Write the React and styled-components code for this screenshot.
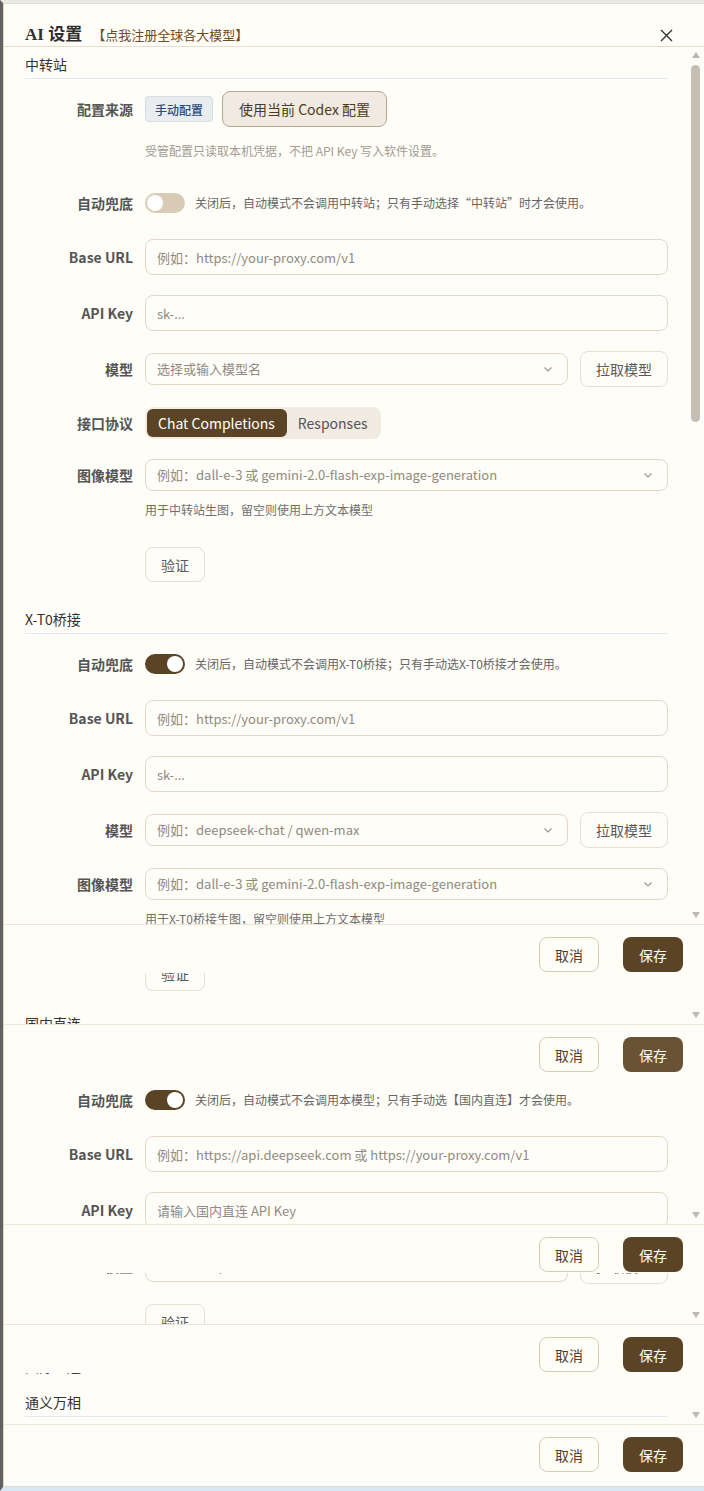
import React from "react";
import styled, { createGlobalStyle } from "styled-components";

const GlobalStyle = createGlobalStyle`
  html, body {
    margin: 0;
    padding: 0;
    background: #fffdf8;
  }
  body {
    font-family: "Noto Sans CJK SC", "Noto Sans", sans-serif;
    font-size: 14px;
    color: #333;
  }
  * { box-sizing: border-box; }
`;

const Frame = styled.div`
  width: 704px;
  border-top: 3px solid #ebe8e1;
  border-left: 3px solid #626262;
  border-bottom: 4px solid #d9e6f3;
  background: #fffdf8;
`;

const Modal = styled.div`
  border-top: 1px solid #e3dccd;
  border-left: 1px solid #ddd5c4;
  border-bottom: 1px solid #e3dccd;
  background: #fffdf8;
`;

const Header = styled.div`
  height: 43px;
  display: flex;
  align-items: center;
  padding: 20px 31px 0 21px;
  border-bottom: 1px solid #e6dece;
`;

const Title = styled.div`
  font-family: "Liberation Serif", "Noto Sans CJK SC", serif;
  font-size: 17px;
  font-weight: 700;
  line-height: 22px;
  color: #2f2f2f;
`;

const SignupLink = styled.a`
  margin-left: 10px;
  font-size: 13px;
  line-height: 22px;
  color: #6b4c25;
  text-decoration: none;
  cursor: pointer;
`;

const CloseButton = styled.button`
  margin-left: auto;
  width: 14px;
  height: 14px;
  padding: 0;
  border: none;
  background: none;
  display: flex;
  align-items: center;
  justify-content: center;
  cursor: pointer;
`;

const Port = styled.div`
  position: relative;
  height: ${(p) => p.$h}px;
  display: flex;
  overflow: hidden;
`;

const Clip = styled.div`
  flex: 1;
  min-width: 0;
  overflow: hidden;
`;

const Body = styled.div`
  margin-top: -${(p) => p.$scroll}px;
  padding: 7px 21px 40px 21px;
`;

const Track = styled.div`
  width: 15px;
  flex: none;
  display: flex;
  flex-direction: column;
  align-items: center;
  padding: 5px 4px 6px 2px;
`;

const ArrowUp = styled.div`
  width: 0;
  height: 0;
  border-left: 4px solid transparent;
  border-right: 4px solid transparent;
  border-bottom: 6px solid #bdb7ad;
`;

const ArrowDown = styled(ArrowUp)`
  border-bottom: none;
  border-top: 6px solid #bdb7ad;
`;

const Thumb = styled.div`
  width: 9px;
  height: ${(p) => p.$h}px;
  margin-top: 7px;
  border-radius: 5px;
  background: #c4beb4;
`;

const Spring = styled.div`
  flex: 1;
`;

const Footer = styled.div`
  height: ${(p) => (p.$overlay ? 49 : 62)}px;
  display: flex;
  justify-content: flex-end;
  gap: 24px;
  padding: 12px 21px 0;
  border-top: 1px solid #eee5d5;
  background: #fffdf8;
  ${(p) => p.$overlay && "position: absolute; top: 0; left: 0; right: 0; z-index: 2;"}
`;

const CancelButton = styled.button`
  width: 60px;
  height: 35px;
  border: 1px solid #d9ccb3;
  border-radius: 8px;
  background: #fffdf8;
  color: #4f3f2c;
  font-family: inherit;
  font-size: 14px;
  line-height: 20px;
  cursor: pointer;
`;

const SaveButton = styled(CancelButton)`
  border: none;
  background: ${(p) => (p.$hover ? "#6a5235" : "#5b4426")};
  color: #fff;
`;

const SectionTitle = styled.div`
  margin-top: ${(p) => p.$mt || 0}px;
  font-size: 14px;
  line-height: 20px;
  color: #333;
  padding-bottom: 4px;
  border-bottom: 1px solid ${(p) => (p.$plain ? "transparent" : "#e3e8f1")};
`;

const Row = styled.div`
  display: flex;
  align-items: center;
  margin-top: ${(p) => p.$mt}px;
  height: ${(p) => p.$h || 36}px;
`;

const Label = styled.div`
  width: 120px;
  flex: none;
  padding-right: 12px;
  text-align: right;
  font-size: 14px;
  font-weight: 700;
  line-height: 20px;
  color: #555;
`;

const Field = styled.div`
  flex: 1;
  min-width: 0;
  display: flex;
  align-items: center;
  gap: ${(p) => p.$gap || 12}px;
`;

const Badge = styled.span`
  height: 26px;
  padding: 0 9px;
  display: inline-flex;
  align-items: center;
  border: 1px solid #d5dce3;
  border-radius: 4px;
  background: #e9edf0;
  color: #2c4a7c;
  font-size: 12px;
  font-weight: 500;
`;

const SoftButton = styled.button`
  height: 36px;
  padding: 0 16px;
  border: 1px solid #b5a68c;
  border-radius: 8px;
  background: #f0eae2;
  color: #4b3a25;
  font-family: inherit;
  font-size: 14px;
`;

const Hint = styled.div`
  margin-top: ${(p) => p.$mt}px;
  margin-left: 120px;
  font-size: 12px;
  line-height: 18px;
  color: ${(p) => (p.$light ? "#a29c93" : "#6f6f6f")};
`;

const Switch = styled.span`
  width: 40px;
  height: 20px;
  flex: none;
  border-radius: 10px;
  padding: 2px;
  display: flex;
  justify-content: ${(p) => (p.$on ? "flex-end" : "flex-start")};
  background: ${(p) => (p.$on ? "#5b4426" : "#d8ccb7")};

  &::after {
    content: "";
    width: 16px;
    height: 16px;
    border-radius: 50%;
    background: #fff;
  }
`;

const SwitchText = styled.span`
  font-size: 12px;
  line-height: 18px;
  color: #666;
  white-space: nowrap;
`;

const TextInput = styled.input`
  flex: 1;
  min-width: 0;
  height: 36px;
  padding: 0 11px;
  border: 1px solid #e3d8c4;
  border-radius: 8px;
  background: #fffdf8;
  font-family: inherit;
  font-size: 13px;
  color: #333;
  outline: none;

  &::placeholder { color: #8f8a82; }
`;

const Combo = styled.div`
  flex: 1;
  min-width: 0;
  height: 32px;
  padding: 0 13px 0 11px;
  display: flex;
  align-items: center;
  justify-content: space-between;
  border: 1px solid #e3d8c4;
  border-radius: 8px;
  background: #fffdf8;
  font-size: 13px;
  line-height: 18px;
  color: #8f8a82;
`;

const GhostButton = styled.button`
  flex: none;
  height: ${(p) => p.$h || 36}px;
  width: ${(p) => p.$w}px;
  border: 1px solid #e8dfce;
  border-radius: 8px;
  background: #fffdf8;
  color: #5a5a5a;
  font-family: inherit;
  font-size: 14px;
`;

const VerifyRow = styled.div`
  margin-top: ${(p) => p.$mt}px;
  margin-left: 120px;
`;

const Segmented = styled.div`
  height: 32px;
  padding: 2px;
  display: inline-flex;
  border-radius: 8px;
  background: #f1ebe2;
`;

const Segment = styled.span`
  padding: 0 12px 0 11px;
  display: flex;
  align-items: center;
  border-radius: 6px;
  font-size: 14px;
  background: ${(p) => (p.$active ? "#5b4426" : "transparent")};
  color: ${(p) => (p.$active ? "#fff" : "#555")};
`;

function Chevron() {
  return (
    <svg width="12" height="12" viewBox="0 0 12 12" fill="none">
      <path d="M2.5 4.5 L6 8 L9.5 4.5" stroke="#9a948b" strokeWidth="1.1" />
    </svg>
  );
}

function Select({ placeholder }) {
  return (
    <Combo>
      <span>{placeholder}</span>
      <Chevron />
    </Combo>
  );
}

function AutoRow({ mt, on, text }) {
  return (
    <Row $mt={mt}>
      <Label>自动兜底</Label>
      <Field $gap={10}>
        <Switch $on={on} />
        <SwitchText>{text}</SwitchText>
      </Field>
    </Row>
  );
}

function InputRow({ label, placeholder }) {
  return (
    <Row $mt={label === "Base URL" ? 18 : 20}>
      <Label>{label}</Label>
      <Field>
        <TextInput placeholder={placeholder} />
      </Field>
    </Row>
  );
}

function ModelRow({ placeholder }) {
  return (
    <Row $mt={20}>
      <Label>模型</Label>
      <Field>
        <Select placeholder={placeholder} />
        <GhostButton $w={88}>拉取模型</GhostButton>
      </Field>
    </Row>
  );
}

function ImageModelRow() {
  return (
    <Row $mt={20} $h={32}>
      <Label>图像模型</Label>
      <Field>
        <Select placeholder="例如：dall-e-3 或 gemini-2.0-flash-exp-image-generation" />
      </Field>
    </Row>
  );
}

function Verify({ mt }) {
  return (
    <VerifyRow $mt={mt}>
      <GhostButton $w={60} $h={35}>验证</GhostButton>
    </VerifyRow>
  );
}

function Form() {
  return (
    <>
      <SectionTitle>中转站</SectionTitle>
      <Row $mt={12}>
        <Label>配置来源</Label>
        <Field $gap={9}>
          <Badge>手动配置</Badge>
          <SoftButton>使用当前 Codex 配置</SoftButton>
        </Field>
      </Row>
      <Hint $mt={15} $light>受管配置只读取本机凭据，不把 API Key 写入软件设置。</Hint>
      <AutoRow mt={25} text="关闭后，自动模式不会调用中转站；只有手动选择“中转站”时才会使用。" />
      <InputRow label="Base URL" placeholder="例如：https://your-proxy.com/v1" />
      <InputRow label="API Key" placeholder="sk-..." />
      <ModelRow placeholder="选择或输入模型名" />
      <Row $mt={20} $h={32}>
        <Label>接口协议</Label>
        <Field>
          <Segmented>
            <Segment $active>Chat Completions</Segment>
            <Segment>Responses</Segment>
          </Segmented>
        </Field>
      </Row>
      <ImageModelRow />
      <Hint $mt={10}>用于中转站生图，留空则使用上方文本模型</Hint>
      <Verify mt={28} />

      <SectionTitle $mt={27}>X-T0桥接</SectionTitle>
      <AutoRow mt={12} on text="关闭后，自动模式不会调用X-T0桥接；只有手动选X-T0桥接才会使用。" />
      <InputRow label="Base URL" placeholder="例如：https://your-proxy.com/v1" />
      <InputRow label="API Key" placeholder="sk-..." />
      <ModelRow placeholder="例如：deepseek-chat / qwen-max" />
      <ImageModelRow />
      <Hint $mt={10}>用于X-T0桥接生图，留空则使用上方文本模型</Hint>
      <Verify mt={28} />

      <SectionTitle $mt={22}>国内直连</SectionTitle>
      <AutoRow mt={12} on text="关闭后，自动模式不会调用本模型；只有手动选【国内直连】才会使用。" />
      <InputRow label="Base URL" placeholder="例如：https://api.deepseek.com 或 https://your-proxy.com/v1" />
      <InputRow label="API Key" placeholder="请输入国内直连 API Key" />
      <ModelRow placeholder="例如：deepseek-chat" />
      <Verify mt={20} />

      <SectionTitle $mt={17} $plain>国际直连</SectionTitle>
      <SectionTitle $mt={11}>通义万相</SectionTitle>
      <AutoRow mt={12} on text="关闭后，自动模式不会调用通义万相；只有手动选择时才会使用。" />
      <InputRow label="API Key" placeholder="请输入 DashScope API Key" />
    </>
  );
}

function Actions({ overlay, hover }) {
  return (
    <Footer $overlay={overlay}>
      <CancelButton>取消</CancelButton>
      <SaveButton $hover={hover}>保存</SaveButton>
    </Footer>
  );
}

// one captured scroll position of the settings body
function Viewport({ height, scroll, thumb, footer, hover }) {
  return (
    <Port $h={height}>
      <Clip>
        <Body $scroll={scroll}>
          <Form />
        </Body>
      </Clip>
      <Track>
        <ArrowUp />
        {thumb && <Thumb $h={thumb} />}
        <Spring />
        <ArrowDown />
      </Track>
      {footer && <Actions overlay hover={hover} />}
    </Port>
  );
}

const frames = [
  { height: 877, scroll: 0, thumb: 357 },
  { height: 100, scroll: 877, footer: true },
  { height: 200, scroll: 945, footer: true, hover: true },
  { height: 100, scroll: 1145, footer: true },
  { height: 100, scroll: 1245, footer: true },
];

export default function App() {
  return (
    <>
      <GlobalStyle />
      <Frame>
        <Modal>
          <Header>
            <Title>AI 设置</Title>
            <SignupLink>【点我注册全球各大模型】</SignupLink>
            <CloseButton aria-label="关闭">
              <svg width="13" height="13" viewBox="0 0 13 13">
                <path d="M1 1 L12 12 M12 1 L1 12" stroke="#333" strokeWidth="1.4" />
              </svg>
            </CloseButton>
          </Header>
          {frames.map((f, i) => (
            <Viewport key={i} {...f} />
          ))}
          <Actions />
        </Modal>
      </Frame>
    </>
  );
}
